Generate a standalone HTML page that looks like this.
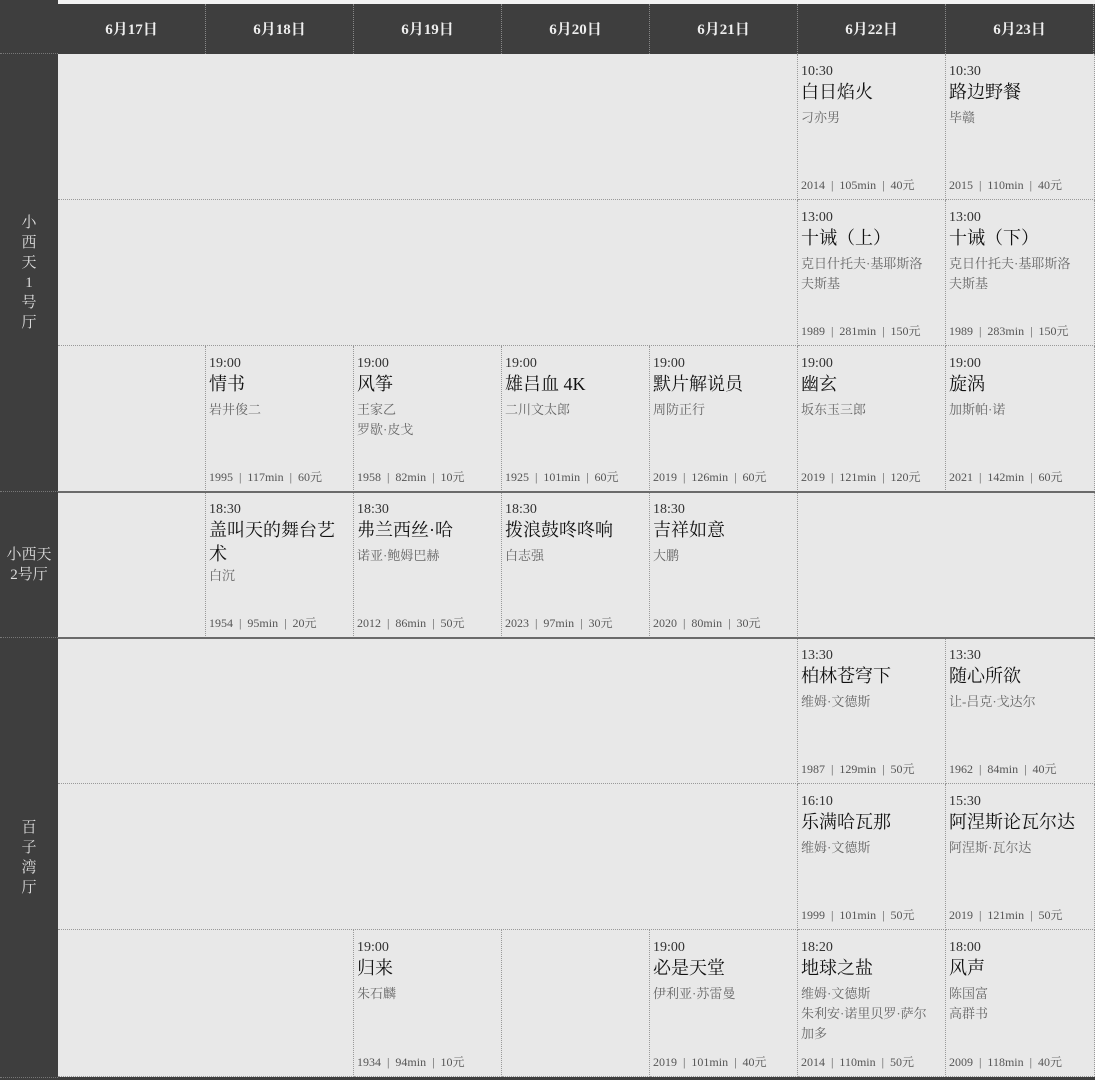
<!DOCTYPE html>
<html><head><meta charset="utf-8"><style>
*{margin:0;padding:0;box-sizing:border-box}
body{width:1095px;height:1080px;background:#3e3e3e;position:relative;overflow:hidden;font-family:"Liberation Serif","Noto Serif CJK SC",serif}
.top{position:absolute;left:58px;top:0;width:1037px;height:4px;background:#f2f2f2}
.h{position:absolute;top:4px;height:50px;width:148px;color:#eee;font-size:15px;font-weight:bold;text-align:center;line-height:52px;border-right:1px dotted #888}
.c{position:absolute;height:146px;background:#e8e8e8;border-right:1px dotted #999;border-bottom:1px dotted #999;padding-left:3px;padding-right:14px;color:#222}
.t{margin-top:9px;font-size:14px;line-height:17px;color:#333}
.n{font-size:18px;line-height:24px;color:#111}
.d{font-size:13px;line-height:20px;color:#666;margin-top:4px}
.f{position:absolute;left:3px;bottom:6px;font-size:12px;color:#555;white-space:nowrap}
.sep{position:absolute;left:58px;width:1037px;height:2px;background:#6a6a6a}
.lab{position:absolute;left:0;width:58px;color:#ddd;font-size:15px;text-align:center;display:flex;align-items:center;justify-content:center;border-bottom:1px dotted #777;line-height:20px}
</style></head><body>
<div class="top"></div>
<div class="lab" style="top:4px;height:50px"></div>
<div class="h" style="left:58px">6月17日</div>
<div class="h" style="left:206px">6月18日</div>
<div class="h" style="left:354px">6月19日</div>
<div class="h" style="left:502px">6月20日</div>
<div class="h" style="left:650px">6月21日</div>
<div class="h" style="left:798px">6月22日</div>
<div class="h" style="left:946px">6月23日</div>

<div class="lab" style="top:54px;height:438px">小<br>西<br>天<br>1<br>号<br>厅</div>
<div class="lab" style="top:492px;height:146px">小西天<br>2号厅</div>
<div class="lab" style="top:638px;height:440px">百<br>子<br>湾<br>厅</div>

<div class="c" style="left:58px;top:54px;width:740px"></div>
<div class="c" style="left:798px;top:54px;width:148px"><div class="t">10:30</div><div class="n">白日焰火</div><div class="d">刁亦男</div><div class="f">2014 &nbsp;|&nbsp; 105min &nbsp;|&nbsp; 40元</div></div>
<div class="c" style="left:946px;top:54px;width:149px"><div class="t">10:30</div><div class="n">路边野餐</div><div class="d">毕赣</div><div class="f">2015 &nbsp;|&nbsp; 110min &nbsp;|&nbsp; 40元</div></div>

<div class="c" style="left:58px;top:200px;width:740px"></div>
<div class="c" style="left:798px;top:200px;width:148px"><div class="t">13:00</div><div class="n">十诫（上）</div><div class="d">克日什托夫·基耶斯洛夫斯基</div><div class="f">1989 &nbsp;|&nbsp; 281min &nbsp;|&nbsp; 150元</div></div>
<div class="c" style="left:946px;top:200px;width:149px"><div class="t">13:00</div><div class="n">十诫（下）</div><div class="d">克日什托夫·基耶斯洛夫斯基</div><div class="f">1989 &nbsp;|&nbsp; 283min &nbsp;|&nbsp; 150元</div></div>

<div class="c" style="left:58px;top:346px;width:148px"></div>
<div class="c" style="left:206px;top:346px;width:148px"><div class="t">19:00</div><div class="n">情书</div><div class="d">岩井俊二</div><div class="f">1995 &nbsp;|&nbsp; 117min &nbsp;|&nbsp; 60元</div></div>
<div class="c" style="left:354px;top:346px;width:148px"><div class="t">19:00</div><div class="n">风筝</div><div class="d">王家乙<br>罗歇·皮戈</div><div class="f">1958 &nbsp;|&nbsp; 82min &nbsp;|&nbsp; 10元</div></div>
<div class="c" style="left:502px;top:346px;width:148px"><div class="t">19:00</div><div class="n">雄吕血 4K</div><div class="d">二川文太郎</div><div class="f">1925 &nbsp;|&nbsp; 101min &nbsp;|&nbsp; 60元</div></div>
<div class="c" style="left:650px;top:346px;width:148px"><div class="t">19:00</div><div class="n">默片解说员</div><div class="d">周防正行</div><div class="f">2019 &nbsp;|&nbsp; 126min &nbsp;|&nbsp; 60元</div></div>
<div class="c" style="left:798px;top:346px;width:148px"><div class="t">19:00</div><div class="n">幽玄</div><div class="d">坂东玉三郎</div><div class="f">2019 &nbsp;|&nbsp; 121min &nbsp;|&nbsp; 120元</div></div>
<div class="c" style="left:946px;top:346px;width:149px"><div class="t">19:00</div><div class="n">旋涡</div><div class="d">加斯帕·诺</div><div class="f">2021 &nbsp;|&nbsp; 142min &nbsp;|&nbsp; 60元</div></div>

<div class="c" style="left:58px;top:492px;width:148px"></div>
<div class="c" style="left:206px;top:492px;width:148px"><div class="t">18:30</div><div class="n">盖叫天的舞台艺术</div><div class="d" style="margin-top:0">白沉</div><div class="f">1954 &nbsp;|&nbsp; 95min &nbsp;|&nbsp; 20元</div></div>
<div class="c" style="left:354px;top:492px;width:148px"><div class="t">18:30</div><div class="n">弗兰西丝·哈</div><div class="d">诺亚·鲍姆巴赫</div><div class="f">2012 &nbsp;|&nbsp; 86min &nbsp;|&nbsp; 50元</div></div>
<div class="c" style="left:502px;top:492px;width:148px"><div class="t">18:30</div><div class="n">拨浪鼓咚咚响</div><div class="d">白志强</div><div class="f">2023 &nbsp;|&nbsp; 97min &nbsp;|&nbsp; 30元</div></div>
<div class="c" style="left:650px;top:492px;width:148px"><div class="t">18:30</div><div class="n">吉祥如意</div><div class="d">大鹏</div><div class="f">2020 &nbsp;|&nbsp; 80min &nbsp;|&nbsp; 30元</div></div>
<div class="c" style="left:798px;top:492px;width:297px"></div>

<div class="c" style="left:58px;top:638px;width:740px"></div>
<div class="c" style="left:798px;top:638px;width:148px"><div class="t">13:30</div><div class="n">柏林苍穹下</div><div class="d">维姆·文德斯</div><div class="f">1987 &nbsp;|&nbsp; 129min &nbsp;|&nbsp; 50元</div></div>
<div class="c" style="left:946px;top:638px;width:149px"><div class="t">13:30</div><div class="n">随心所欲</div><div class="d">让-吕克·戈达尔</div><div class="f">1962 &nbsp;|&nbsp; 84min &nbsp;|&nbsp; 40元</div></div>

<div class="c" style="left:58px;top:784px;width:740px"></div>
<div class="c" style="left:798px;top:784px;width:148px"><div class="t">16:10</div><div class="n">乐满哈瓦那</div><div class="d">维姆·文德斯</div><div class="f">1999 &nbsp;|&nbsp; 101min &nbsp;|&nbsp; 50元</div></div>
<div class="c" style="left:946px;top:784px;width:149px"><div class="t">15:30</div><div class="n">阿涅斯论瓦尔达</div><div class="d">阿涅斯·瓦尔达</div><div class="f">2019 &nbsp;|&nbsp; 121min &nbsp;|&nbsp; 50元</div></div>

<div class="c" style="left:58px;top:930px;width:296px;height:147px"></div>
<div class="c" style="left:354px;top:930px;width:148px;height:147px"><div class="t">19:00</div><div class="n">归来</div><div class="d">朱石麟</div><div class="f">1934 &nbsp;|&nbsp; 94min &nbsp;|&nbsp; 10元</div></div>
<div class="c" style="left:502px;top:930px;width:148px;height:147px"></div>
<div class="c" style="left:650px;top:930px;width:148px;height:147px"><div class="t">19:00</div><div class="n">必是天堂</div><div class="d">伊利亚·苏雷曼</div><div class="f">2019 &nbsp;|&nbsp; 101min &nbsp;|&nbsp; 40元</div></div>
<div class="c" style="left:798px;top:930px;width:148px;height:147px"><div class="t">18:20</div><div class="n">地球之盐</div><div class="d">维姆·文德斯<br>朱利安·诺里贝罗·萨尔加多</div><div class="f">2014 &nbsp;|&nbsp; 110min &nbsp;|&nbsp; 50元</div></div>
<div class="c" style="left:946px;top:930px;width:149px;height:147px"><div class="t">18:00</div><div class="n">风声</div><div class="d">陈国富<br>高群书</div><div class="f">2009 &nbsp;|&nbsp; 118min &nbsp;|&nbsp; 40元</div></div>

<div class="sep" style="top:491px"></div>
<div class="sep" style="top:637px"></div>
</body></html>
